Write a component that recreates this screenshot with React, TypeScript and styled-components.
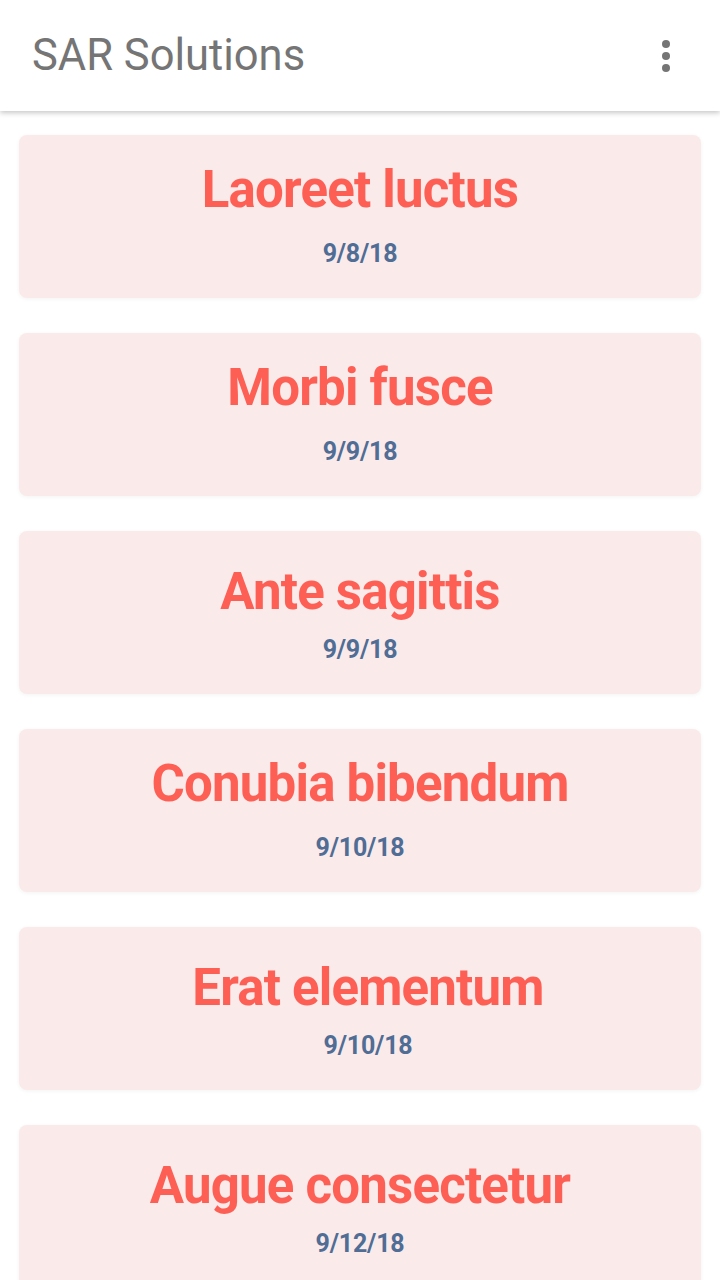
import React from "react";
import styled, { createGlobalStyle } from "styled-components";

const Global = createGlobalStyle`
  html, body { margin: 0; padding: 0; background: #ffffff; }
  body { font-family: Roboto, "Noto Sans", sans-serif; }
`;

const Page = styled.div`
  width: 720px;
  min-height: 1280px;
  background: #fff;
  overflow: hidden;
`;

const AppBar = styled.header`
  height: 111px;
  display: flex;
  align-items: center;
  justify-content: space-between;
  padding: 0 46px 0 32px;
  box-sizing: border-box;
  background: #fff;
  box-shadow: 0 2px 5px rgba(0, 0, 0, 0.22);
  position: relative;
  z-index: 1;
`;

const Title = styled.h1`
  margin: 0;
  font-family: Roboto, sans-serif;
  font-weight: 400;
  font-size: 43.5px;
  line-height: 50px;
  color: #757575;
`;

const MenuButton = styled.button`
  border: 0;
  background: none;
  padding: 0;
  width: 16px;
  height: 40px;
  display: flex;
  align-items: center;
  justify-content: center;
`;

const List = styled.main`
  display: flex;
  flex-direction: column;
  gap: 35px;
  padding: 24px 19px 0 19px;
`;

const Card = styled.article<{ $shift?: number; $indent?: number }>`
  --shift: ${(p) => p.$shift ?? 0}px;
  background: #fbeaea;
  border-radius: 8px;
  height: 163px;
  flex-shrink: 0;
  box-shadow: 0 1px 4px rgba(0, 0, 0, 0.05);
  display: flex;
  flex-direction: column;
  align-items: center;
  padding: 25px 0 0 ${(p) => p.$indent ?? 0}px;
  box-sizing: border-box;
`;

const CardTitle = styled.h2`
  margin: var(--shift) 0 0 0;
  font-family: Roboto, sans-serif;
  font-weight: 700;
  font-size: 51px;
  letter-spacing: -0.8px;
  line-height: 60px;
  color: #fe5f55;
  white-space: nowrap;
`;

const CardDate = styled.div`
  margin-top: calc(19px - var(--shift));
  font-family: Roboto, sans-serif;
  font-weight: 700;
  font-size: 25px;
  letter-spacing: -0.2px;
  line-height: 30px;
  color: #4f6d95;
`;

const items = [
  { title: "Laoreet luctus", date: "9/8/18", shift: 0, indent: 0 },
  { title: "Morbi fusce", date: "9/9/18", shift: 0, indent: 0 },
  { title: "Ante sagittis", date: "9/9/18", shift: 6, indent: 0 },
  { title: "Conubia bibendum", date: "9/10/18", shift: 0, indent: 0 },
  { title: "Erat elementum", date: "9/10/18", shift: 6, indent: 16 },
  { title: "Augue consectetur", date: "9/12/18", shift: 6, indent: 0 },
];

export default function App() {
  return (
    <Page>
      <Global />
      <AppBar>
        <Title>SAR Solutions</Title>
        <MenuButton aria-label="More options">
          <svg width="10" height="34" viewBox="0 0 10 34">
            <circle cx="5" cy="5" r="4" fill="#757575" />
            <circle cx="5" cy="17" r="4" fill="#757575" />
            <circle cx="5" cy="29" r="4" fill="#757575" />
          </svg>
        </MenuButton>
      </AppBar>
      <List>
        {items.map((it) => (
          <Card key={it.title} $shift={it.shift} $indent={it.indent}>
            <CardTitle>{it.title}</CardTitle>
            <CardDate>{it.date}</CardDate>
          </Card>
        ))}
      </List>
    </Page>
  );
}
